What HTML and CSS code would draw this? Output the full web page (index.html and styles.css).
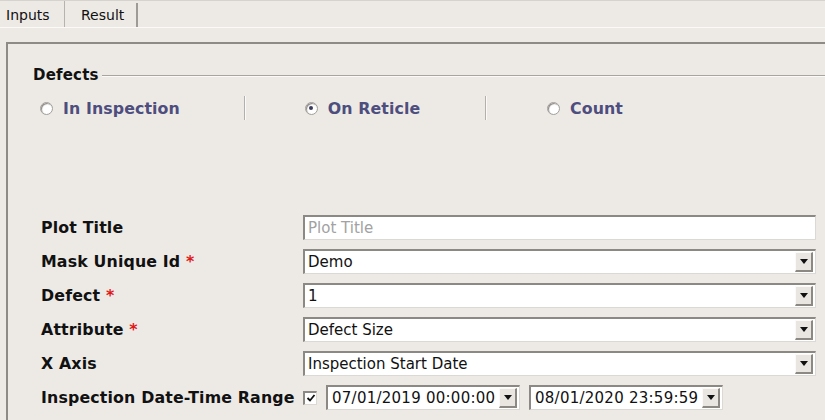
FILE: index.html
```html
<!DOCTYPE html>
<html>
<head>
<meta charset="utf-8">
<link rel="stylesheet" href="styles.css">
</head>
<body>
<div class="tabbar">
  <div class="tab active">Inputs</div>
  <div class="tab">Result</div>
</div>
<div class="panel">
  <div class="group-title"><span class="gt-text">Defects</span><span class="gt-line"></span></div>
  <div class="radios">
    <div class="rcell first"><span class="radio"></span><span class="rlabel">In Inspection</span></div>
    <div class="sep"></div>
    <div class="rcell second"><span class="radio checked"></span><span class="rlabel">On Reticle</span></div>
    <div class="sep"></div>
    <div class="rcell third"><span class="radio"></span><span class="rlabel">Count</span></div>
  </div>
  <div class="form">
    <div class="lbl">Plot Title</div>
    <div class="field"><div class="text placeholder">Plot Title</div></div>

    <div class="lbl">Mask Unique Id <span class="req">*</span></div>
    <div class="field"><div class="combo"><span class="val">Demo</span><span class="btn"><span class="tri"></span></span></div></div>

    <div class="lbl">Defect <span class="req">*</span></div>
    <div class="field"><div class="combo"><span class="val">1</span><span class="btn"><span class="tri"></span></span></div></div>

    <div class="lbl">Attribute <span class="req">*</span></div>
    <div class="field"><div class="combo"><span class="val">Defect Size</span><span class="btn"><span class="tri"></span></span></div></div>

    <div class="lbl">X Axis</div>
    <div class="field"><div class="combo"><span class="val">Inspection Start Date</span><span class="btn"><span class="tri"></span></span></div></div>

    <div class="lbl">Inspection Date-Time Range</div>
    <div class="field daterow">
      <span class="check"><svg width="10" height="10" viewBox="0 0 10 10"><path d="M1.5 5 L4 7.5 L8.5 2" fill="none" stroke="#111" stroke-width="1.8"/></svg></span>
      <div class="combo date"><span class="val">07/01/2019 00:00:00</span><span class="btn"><span class="tri"></span></span></div>
      <div class="combo date"><span class="val">08/01/2020 23:59:59</span><span class="btn"><span class="tri"></span></span></div>
    </div>
  </div>
</div>
</body>
</html>
```
FILE: styles.css
```css
html, body {
  margin: 0;
  padding: 0;
  background: #edeae6;
  font-family: "DejaVu Sans", sans-serif;
  color: #111;
  height: 420px;
  overflow: hidden;
}
.tabbar {
  display: flex;
  height: 26px;
  border-top: 1px solid #d6d2ce;
  border-bottom: 1px solid #fbfaf9;
}
.tab {
  font-size: 14px;
  box-sizing: border-box;
  padding: 0 0 0 16px;
  width: 73px;
  border-right: 2px solid #9e9a96;
  margin-top: 2px;
  line-height: 24px;
}
.tab.active {
  width: 65px;
  padding-left: 6px;
  border-right: 1px solid #b6b2ae;
  margin-top: 0;
  line-height: 28px;
}
.panel {
  margin: 14px 0 0 6px;
  border-top: 2px solid #8e8a86;
  border-left: 2px solid #8e8a86;
  height: 377px;
}
.group-title {
  display: flex;
  align-items: center;
  margin-top: 22px;
  padding-left: 25px;
}
.gt-text {
  font-weight: bold;
  font-size: 15px;
  line-height: 19px;
  padding-right: 3px;
  letter-spacing: 0.2px;
}
.gt-line {
  flex: 1;
  height: 0;
  border-top: 1px solid #a8a4a0;
  border-bottom: 1px solid #fbfaf8;
  margin-top: 1px;
}
.radios {
  display: flex;
  align-items: center;
  height: 24px;
  margin-top: 11px;
}
.rcell {
  display: flex;
  align-items: center;
  justify-content: center;
  box-sizing: border-box;
}
.rcell.first {
  justify-content: flex-start;
  width: 236px;
  padding-left: 32px;
}
.rcell.second {
  width: 239px;
  padding-right: 6px;
}
.rcell.third {
  width: 196px;
}
.sep {
  width: 1px;
  height: 24px;
  background: #b3afab;
  border-right: 1px solid #fbfaf8;
}
.radio {
  width: 11px;
  height: 11px;
  border-radius: 50%;
  background: #fff;
  border: 1px solid #a29e9a;
  box-shadow: inset 1px 1px 1px #8a8682;
  margin-right: 10px;
  position: relative;
}
.radio.checked::after {
  content: "";
  position: absolute;
  left: 3.5px;
  top: 3.5px;
  width: 4px;
  height: 4px;
  border-radius: 50%;
  background: #3a3a5a;
}
.rlabel {
  font-weight: bold;
  font-size: 15.8px;
  color: #4e4e7e;
  letter-spacing: 0.1px;
}
.form {
  display: grid;
  grid-template-columns: 295px 513px;
  row-gap: 9px;
  margin-top: 95px;
}
.lbl {
  padding-left: 33px;
  font-weight: bold;
  font-size: 15.8px;
  letter-spacing: 0.15px;
  height: 25px;
  line-height: 26px;
  white-space: nowrap;
}
.req {
  color: #e01818;
}
.field {
  height: 25px;
}
.text, .combo {
  box-sizing: border-box;
  height: 25px;
  background: #fff;
  border-top: 2px solid #8c8884;
  border-left: 2px solid #8c8884;
  border-right: 1px solid #dcd8d4;
  border-bottom: 1px solid #dcd8d4;
  font-size: 15px;
  line-height: 21px;
  padding-left: 3px;
  display: flex;
  align-items: center;
}
.placeholder {
  color: #a2a2a2;
}
.combo .val {
  flex: 1;
  white-space: nowrap;
  overflow: hidden;
}
.btn {
  box-sizing: border-box;
  width: 18px;
  height: 20px;
  margin-right: 2px;
  background: #e9e6e2;
  border-top: 1px solid #fbfaf8;
  border-left: 1px solid #fbfaf8;
  border-right: 2px solid #8c8884;
  border-bottom: 2px solid #8c8884;
  display: flex;
  align-items: center;
  justify-content: center;
}
.tri {
  width: 0;
  height: 0;
  border-left: 4px solid transparent;
  border-right: 4px solid transparent;
  border-top: 5px solid #111;
}
.daterow {
  display: flex;
  align-items: center;
}
.check {
  box-sizing: border-box;
  width: 14px;
  height: 14px;
  background: #fff;
  border-top: 2px solid #8c8884;
  border-left: 2px solid #8c8884;
  border-right: 1px solid #dcd8d4;
  border-bottom: 1px solid #dcd8d4;
  display: flex;
  align-items: center;
  justify-content: center;
  margin-right: 9px;
}
.combo.date {
  width: 194px;
  margin-right: 9px;
  padding-left: 4px;
  letter-spacing: 0.25px;
}
```
